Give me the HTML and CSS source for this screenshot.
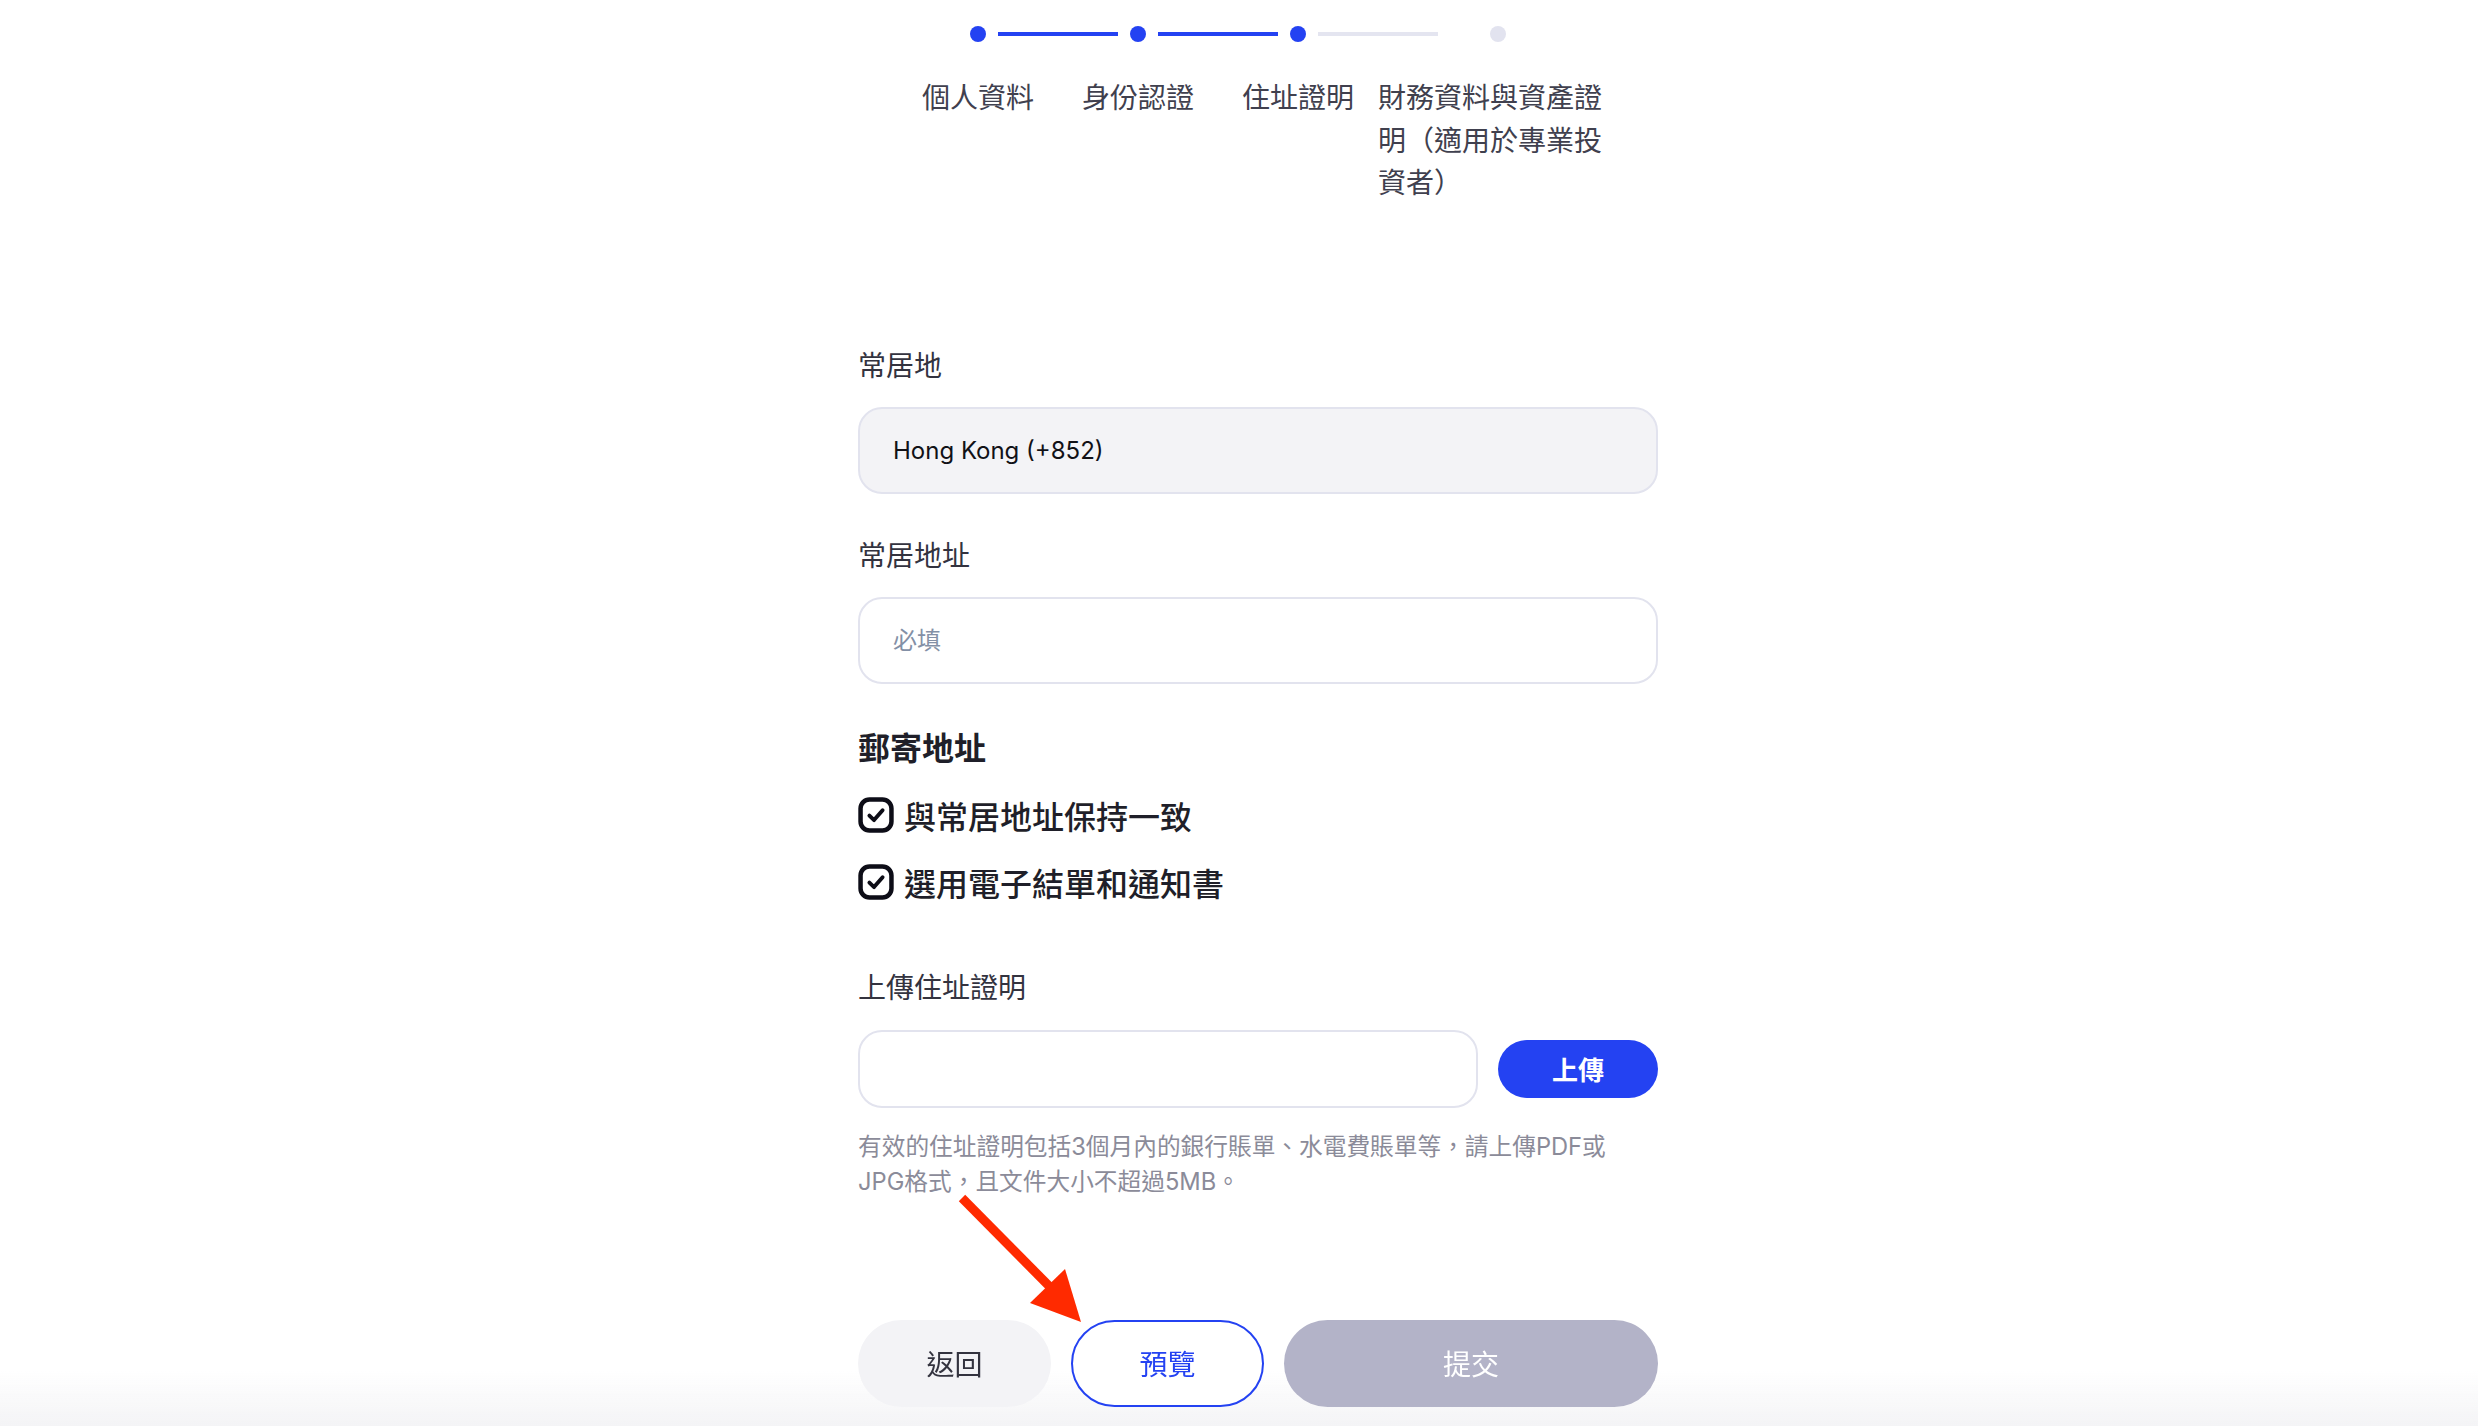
FILE: index.html
```html
<!DOCTYPE html>
<html lang="zh-Hant">
<head>
    <meta charset="UTF-8">
    <meta name="viewport" content="width=device-width, initial-scale=1.0">
    <title>住址證明</title>
    <link rel="stylesheet" href="styles.css">
</head>
<body>
    <div class="page">
        <div class="stepper">
            <div class="track">
                <span class="dot done"></span><span class="bar done"></span>
                <span class="dot done"></span><span class="bar done"></span>
                <span class="dot done"></span><span class="bar"></span>
                <span class="dot last"></span>
            </div>
            <div class="step-labels">
                <div class="step-label">個人資料</div>
                <div class="step-label">身份認證</div>
                <div class="step-label">住址證明</div>
                <div class="step-label wide">財務資料與資產證明（適用於專業投資者）</div>
            </div>
        </div>

        <form class="form">
            <label class="field-label">常居地</label>
            <div class="input readonly">Hong Kong (+852)</div>

            <label class="field-label">常居地址</label>
            <input class="input" type="text" placeholder="必填">

            <h2 class="section-title">郵寄地址</h2>
            <div class="check-row">
                <svg class="check-icon" viewBox="0 0 24 24" width="36" height="36">
                    <rect x="1.7" y="1.7" width="20.6" height="20.6" rx="6" fill="none" stroke="#0d0d17" stroke-width="3"/>
                    <path d="M7.6 12.4 L10.7 15.4 L16.4 8.8" fill="none" stroke="#0d0d17" stroke-width="2.6" stroke-linecap="round" stroke-linejoin="round"/>
                </svg>
                <span>與常居地址保持一致</span>
            </div>
            <div class="check-row">
                <svg class="check-icon" viewBox="0 0 24 24" width="36" height="36">
                    <rect x="1.7" y="1.7" width="20.6" height="20.6" rx="6" fill="none" stroke="#0d0d17" stroke-width="3"/>
                    <path d="M7.6 12.4 L10.7 15.4 L16.4 8.8" fill="none" stroke="#0d0d17" stroke-width="2.6" stroke-linecap="round" stroke-linejoin="round"/>
                </svg>
                <span>選用電子結單和通知書</span>
            </div>

            <label class="field-label upload-label">上傳住址證明</label>
            <div class="upload-row">
                <div class="input upload-box"></div>
                <button type="button" class="btn-upload">上傳</button>
            </div>
            <p class="hint">有效的住址證明包括3個月內的銀行賬單、水電費賬單等，請上傳PDF或JPG格式，且文件大小不超過5MB。</p>

            <div class="actions">
                <button type="button" class="btn btn-back">返回</button>
                <button type="button" class="btn btn-preview">預覽</button>
                <button type="button" class="btn btn-submit">提交</button>
            </div>
        </form>
    </div>

    <div class="bottom-fade"></div>

    <!-- annotation arrow -->
    <svg class="arrow" width="140" height="140" viewBox="0 0 140 140">
        <line x1="4" y1="4" x2="95" y2="96" stroke="#ff2a00" stroke-width="9"/>
        <polygon points="72,109 107,75 123,128" fill="#ff2a00"/>
    </svg>
</body>
</html>
```

FILE: styles.css
```css
body {
    margin: 0;
    padding: 0 0 0 38px;
    background-color: #ffffff;
    font-family: Inter, "Noto Sans CJK TC", sans-serif;
    color: #33333f;
}
.page {
    width: 800px;
    margin: 0 auto;
}
.stepper {
    width: 720px;
    margin: 0 auto;
    padding-top: 26px;
}
.track {
    display: flex;
    align-items: center;
    gap: 12px;
    padding-left: 72px;
}
.dot {
    width: 16px;
    height: 16px;
    border-radius: 50%;
    background-color: #2442f2;
    flex: none;
}
.dot.last {
    background-color: #e2e3ef;
    margin-left: 40px;
}
.bar {
    width: 120px;
    height: 4px;
    background-color: #e4e5f0;
    flex: none;
}
.bar.done {
    background-color: #2442f2;
}
.step-labels {
    display: grid;
    grid-template-columns: 160px 160px 160px 240px;
    margin-top: 35px;
}
.step-label {
    font-size: 28px;
    line-height: 42.5px;
    text-align: center;
    color: #40404e;
}
.step-label.wide {
    text-align: left;
}
.form {
    display: flex;
    flex-direction: column;
    margin-top: 141px;
}
.field-label {
    font-size: 28px;
    line-height: 40px;
    color: #33333f;
}
.input {
    box-sizing: border-box;
    width: 100%;
    height: 87px;
    margin: 21px 0 42px;
    padding: 0 33px;
    border: 2px solid #e2e3ee;
    border-radius: 24px;
    background-color: #ffffff;
    font-family: Inter, "Noto Sans CJK TC", sans-serif;
    font-size: 24px;
    color: #111116;
    outline: none;
}
.input::placeholder {
    color: #8390a6;
}
.input.readonly {
    display: flex;
    align-items: center;
    background-color: #f3f3f6;
}
.section-title {
    margin: 1px 0 0;
    font-size: 32px;
    line-height: 44px;
    font-weight: 700;
    color: #1f1f29;
}
.check-row {
    display: flex;
    align-items: center;
    gap: 10px;
    height: 44px;
    margin-top: 22px;
    font-size: 32px;
    font-weight: 500;
    color: #1f1f29;
}
.check-row + .check-row {
    margin-top: 23px;
}
.check-icon {
    flex: none;
}
.upload-label {
    margin-top: 64px;
}
.upload-row {
    display: flex;
    align-items: center;
    gap: 20px;
    margin-top: 22px;
}
.upload-box {
    flex: 1;
    height: 78px;
    margin: 0;
}
.btn-upload {
    width: 160px;
    height: 58px;
    border: none;
    border-radius: 29px;
    background-color: #2442f2;
    color: #ffffff;
    font-family: Inter, "Noto Sans CJK TC", sans-serif;
    font-size: 26px;
    font-weight: 700;
}
.hint {
    max-width: 775px;
    margin: 21px 0 0;
    font-size: 23.7px;
    line-height: 35px;
    color: #8b8b99;
}
.actions {
    display: flex;
    gap: 20px;
    margin-top: 121px;
    position: relative;
    z-index: 1;
}
.btn {
    height: 87px;
    border-radius: 44px;
    font-family: Inter, "Noto Sans CJK TC", sans-serif;
    font-size: 28px;
    border: none;
}
.btn-back {
    width: 193px;
    background-color: #f3f3f6;
    color: #33333f;
}
.btn-preview {
    width: 193px;
    background-color: #ffffff;
    border: 2px solid #2442f2;
    color: #2442f2;
}
.btn-submit {
    flex: 1;
    background-color: #b3b3c8;
    color: #ffffff;
}
.bottom-fade {
    position: fixed;
    left: 0;
    right: 0;
    bottom: 0;
    height: 56px;
    background: linear-gradient(rgba(244, 244, 246, 0), #f4f4f6);
    pointer-events: none;
}
.arrow {
    position: absolute;
    left: 958px;
    top: 1194px;
    z-index: 2;
}
```
